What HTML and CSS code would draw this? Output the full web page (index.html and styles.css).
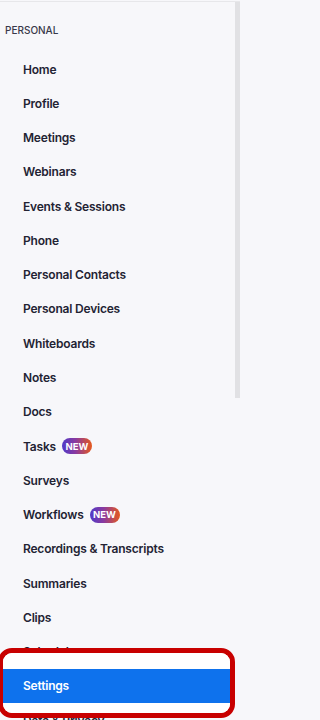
FILE: index.html
```html
<!DOCTYPE html>
<html lang="en">
<head>
<meta charset="utf-8">
<title>Personal menu</title>
<link rel="stylesheet" href="styles.css">
</head>
<body>
<div class="sidebar">
  <div class="section-title">PERSONAL</div>
  <nav class="menu">
    <a class="item">Home</a>
    <a class="item">Profile</a>
    <a class="item">Meetings</a>
    <a class="item">Webinars</a>
    <a class="item">Events &amp; Sessions</a>
    <a class="item">Phone</a>
    <a class="item">Personal Contacts</a>
    <a class="item">Personal Devices</a>
    <a class="item">Whiteboards</a>
    <a class="item">Notes</a>
    <a class="item">Docs</a>
    <a class="item">Tasks <span class="badge">NEW</span></a>
    <a class="item">Surveys</a>
    <a class="item">Workflows <span class="badge">NEW</span></a>
    <a class="item">Recordings &amp; Transcripts</a>
    <a class="item">Summaries</a>
    <a class="item">Clips</a>
    <a class="item">Scheduler</a>
    <a class="item active">Settings</a>
    <a class="item">Data &amp; Privacy</a>
  </nav>
  <div class="scroll-thumb"></div>
  <div class="highlight"><div class="highlight-inner"></div></div>
</div>
</body>
</html>
```
FILE: styles.css
```css
html, body {
  margin: 0;
  padding: 0;
  height: 720px;
  overflow: hidden;
  background: #f7f7fa;
}
body {
  font-family: Inter, "Noto Sans", "Liberation Sans", sans-serif;
}
.sidebar {
  position: relative;
  width: 240px;
  margin-top: 1px;
  border-top: 1px solid #e7e7ea;
  height: 718px;
  overflow: hidden;
}
.section-title {
  padding: 22px 0 0 5px;
  height: 28px;
  box-sizing: border-box;
  font-size: 10px;
  font-weight: 500;
  color: #39394a;
  line-height: 12px;
}
.menu {
  display: flex;
  flex-direction: column;
  padding-top: 22px;
  width: 232px;
}
.item {
  display: flex;
  align-items: center;
  gap: 6px;
  height: 34.28px;
  flex: none;
  padding-left: 23px;
  font-size: 12px;
  font-weight: 600;
  letter-spacing: -0.2px;
  color: #232333;
  text-decoration: none;
}
.item.active {
  background: #0e72ed;
  color: #ffffff;
}
.badge {
  display: inline-flex;
  align-items: center;
  justify-content: center;
  width: 30px;
  height: 16px;
  border-radius: 8px;
  background: linear-gradient(90deg, #4f3ac8 0%, #8a3aa0 45%, #e5591c 100%);
  color: #ffffff;
  font-size: 9.5px;
  font-weight: 700;
  letter-spacing: 0;
}
.scroll-thumb {
  position: absolute;
  right: 0;
  top: 0;
  width: 5px;
  height: 396px;
  background: #e1e1e4;
}
.highlight {
  position: absolute;
  left: -2px;
  top: 646px;
  width: 237px;
  height: 70px;
  box-sizing: border-box;
  border: 5px solid #c80000;
  border-radius: 14px;
}
.highlight-inner {
  height: 100%;
  box-sizing: border-box;
  border-top: 16px solid #ffffff;
  border-bottom: 10px solid #ffffff;
  border-radius: 9px;
}
```
